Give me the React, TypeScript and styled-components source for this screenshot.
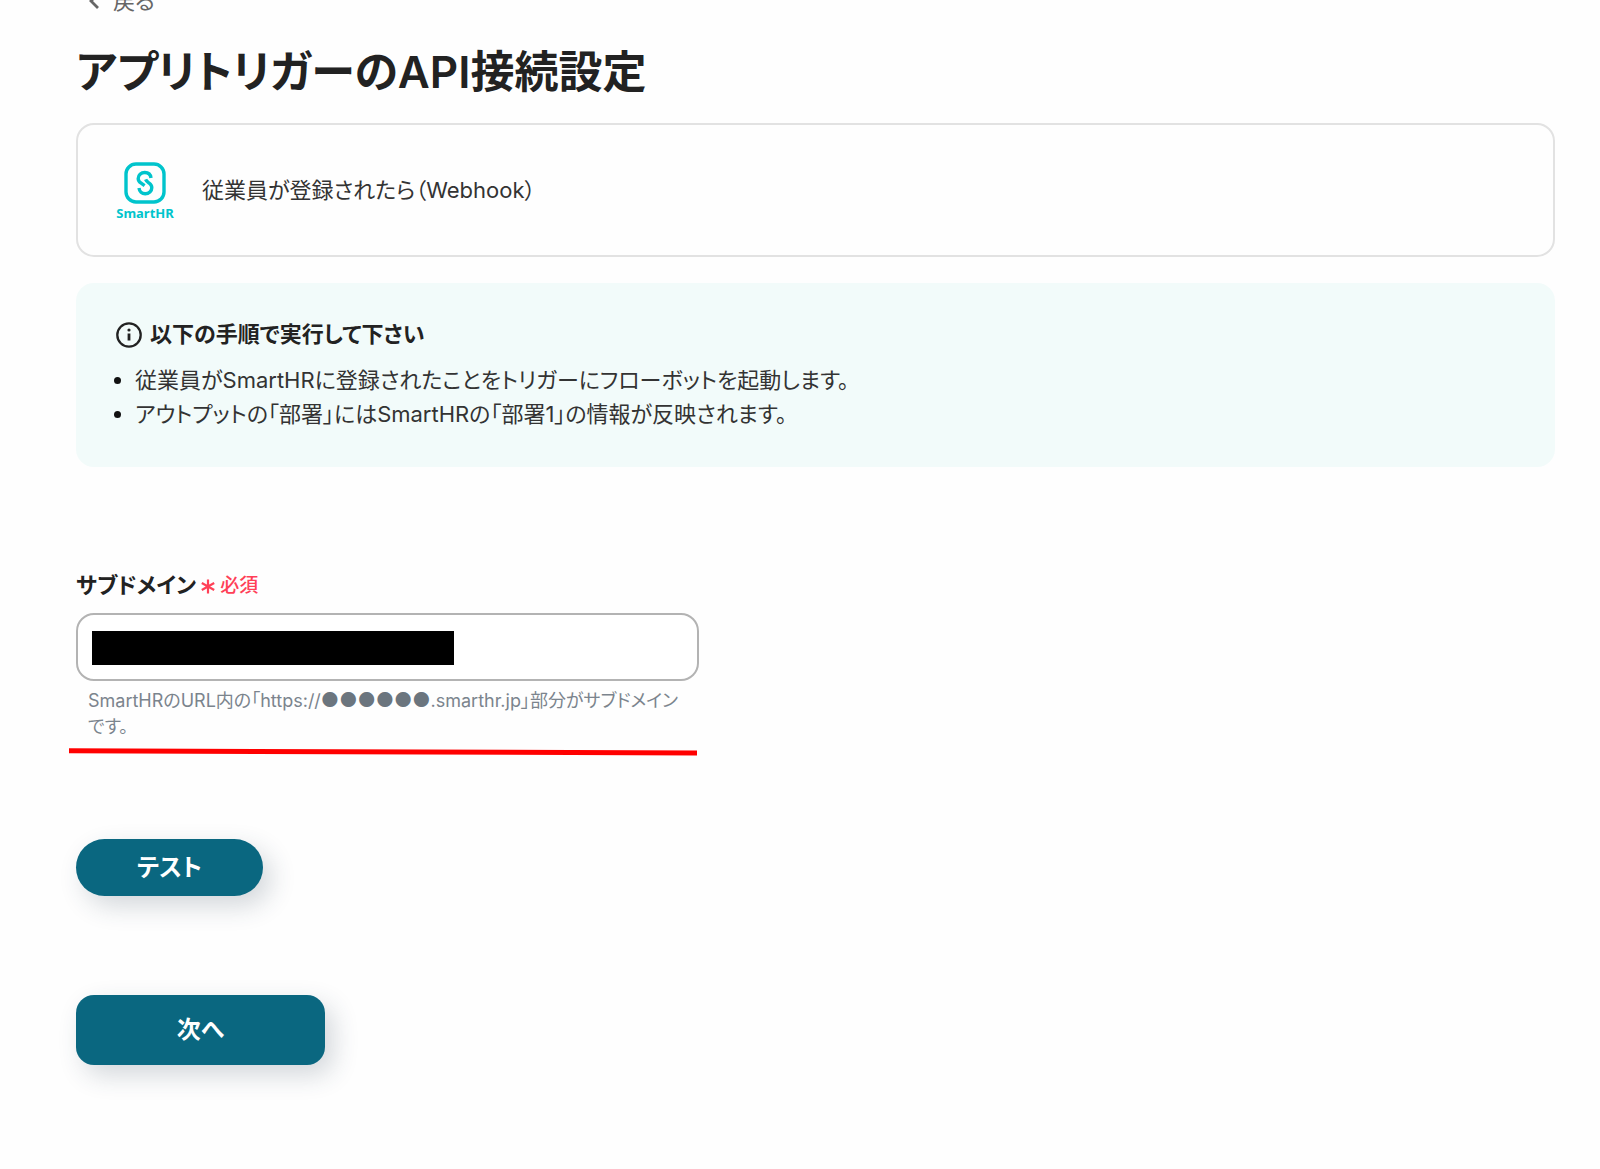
import React from "react";
import styled, { createGlobalStyle } from "styled-components";

const Global = createGlobalStyle`
  *, *::before, *::after { box-sizing: border-box; }
  body {
    margin: 0;
    background: #fefefe;
    color: #222;
    font-family: Inter, "Noto Sans CJK JP", sans-serif;
    font-feature-settings: "palt";
    font-size: 22px;
    line-height: 34px;
    overflow-x: hidden;
  }
`;

const Page = styled.main`
  display: flex;
  flex-direction: column;
  align-items: flex-start;
  margin-top: -16px;
  padding: 0 45px 64px 76px;
`;

const BackLink = styled.a`
  display: inline-flex;
  align-items: center;
  gap: 8px;
  padding-left: 8px;
  color: #666;
  text-decoration: none;
`;

const Title = styled.h1`
  margin: 22px 0 19px;
  font-size: 44px;
  line-height: 64px;
  font-weight: 600;
`;

const TriggerCard = styled.section`
  display: flex;
  align-items: center;
  gap: 28px;
  width: 100%;
  min-height: 134px;
  padding: 0 38px;
  border: 2px solid #e2e2e2;
  border-radius: 18px;
  color: #333;
`;

const Brand = styled.div`
  display: flex;
  flex-direction: column;
  align-items: center;
  width: 58px;
  padding-top: 3px;
  color: #00c4cc;
`;

const BrandName = styled.span`
  font: 700 13px/18px "Noto Sans", sans-serif;
`;

const Notice = styled.section`
  width: 100%;
  margin-top: 26px;
  padding: 34px 38px 36px;
  border-radius: 18px;
  background: #f2fbfa;
`;

const NoticeTitle = styled.h2`
  display: flex;
  align-items: center;
  gap: 8px;
  margin: 0;
  padding-left: 2px;
  font-size: 22px;
  font-weight: 600;
`;

const Steps = styled.ul`
  margin: 12px 0 0;
  padding-left: 21px;
  color: #333;
`;

const Step = styled.li`
  &::marker { color: #111; }
`;

const Field = styled.div`
  position: relative;
  width: 100%;
  max-width: 623px;
  margin-top: 100px;
`;

const Label = styled.label`
  display: flex;
  align-items: center;
  gap: 5px;
  font-size: 22px;
  font-weight: 600;
`;

const Required = styled.span`
  display: flex;
  align-items: center;
  gap: 5px;
  padding-top: 2px;
  color: #ff4057;
  font-size: 19px;
  font-weight: 500;
`;

const InputBox = styled.div`
  position: relative;
  margin-top: 10px;
`;

const TextInput = styled.input`
  display: block;
  width: 100%;
  height: 68px;
  padding: 0 16px;
  border: 2px solid #b3b3b3;
  border-radius: 18px;
  background: #fff;
  font: inherit;
`;

const Redaction = styled.span`
  position: absolute;
  top: 18px;
  left: 16px;
  width: 362px;
  height: 34px;
  background: #000;
`;

const Help = styled.p`
  margin: 7px 0 0;
  padding: 0 16px 0 12px;
  color: #7b848d;
  font-size: 18px;
  line-height: 26px;
`;

const Dots = styled.span`
  color: #6b757e;
  font-size: 20px;
  line-height: 20px;
`;

const Underline = styled.svg`
  position: absolute;
  left: -7px;
  bottom: -16px;
  width: 628px;
  height: 8px;
`;

const Button = styled.button<{ $large?: boolean }>`
  width: ${(p) => (p.$large ? 249 : 187)}px;
  height: ${(p) => (p.$large ? 70 : 57)}px;
  margin-top: 99px;
  border: 0;
  border-radius: ${(p) => (p.$large ? 18 : 29)}px;
  background: #0a6780;
  box-shadow: 8px 10px 26px rgba(40, 60, 80, 0.2);
  color: #fff;
  font: inherit;
  font-size: 24px;
  font-weight: 600;
  font-feature-settings: "palt";
  cursor: pointer;
`;

function ChevronIcon() {
  return (
    <svg width="21" height="22" viewBox="0 0 21 22" fill="none" aria-hidden="true">
      <path d="M14 4L7 11L14 18" stroke="currentColor" strokeWidth="2.8" />
    </svg>
  );
}

function InfoIcon() {
  return (
    <svg width="26" height="28" viewBox="0 -2 26 28" fill="none" aria-hidden="true">
      <circle cx="13" cy="13" r="11.7" stroke="#222" strokeWidth="2.3" />
      <path d="M13 11.5V18.5" stroke="#222" strokeWidth="2.8" />
      <circle cx="13" cy="8" r="1.6" fill="#222" />
    </svg>
  );
}

function SmartHrMark() {
  return (
    <svg width="42" height="42" viewBox="0 0 42 42" fill="none" stroke="currentColor" aria-hidden="true">
      <rect x="2" y="2" width="38" height="38" rx="10" strokeWidth="3.4" />
      <path
        d="M27 16C26.6 12.5 24 10.5 20.8 10.5C17 10.5 14.2 13.2 14.2 16.4C14.2 18.4 15.2 19.8 16.8 20.9L20.6 23.6"
        strokeWidth="3.4"
      />
      <path
        d="M15 26C15.4 29.5 18 31.8 21.2 31.8C25 31.8 27.8 29 27.8 25.8C27.8 23.8 26.8 22.3 25.2 21.2C23.8 20.2 22.4 19.4 21.6 17.4"
        strokeWidth="3.4"
      />
    </svg>
  );
}

function AsteriskIcon() {
  return (
    <svg width="14" height="15" viewBox="0 0 14 15" stroke="currentColor" strokeWidth="2.2" aria-hidden="true">
      <path d="M7 0.5V14.5M0.8 4L13.2 11M13.2 4L0.8 11" />
    </svg>
  );
}

export default function App() {
  return (
    <>
      <Global />
      <Page>
        <BackLink href="#back">
          <ChevronIcon />
          戻る
        </BackLink>
        <Title lang="ja">アプリトリガーのAPI接続設定</Title>

        <TriggerCard>
          <Brand>
            <SmartHrMark />
            <BrandName>SmartHR</BrandName>
          </Brand>
          <span>従業員が登録されたら（Webhook）</span>
        </TriggerCard>

        <Notice>
          <NoticeTitle>
            <InfoIcon />
            以下の手順で実行して下さい
          </NoticeTitle>
          <Steps>
            <Step>従業員がSmartHRに登録されたことをトリガーにフローボットを起動します。</Step>
            <Step>アウトプットの「部署」にはSmartHRの「部署1」の情報が反映されます。</Step>
          </Steps>
        </Notice>

        <Field>
          <Label htmlFor="subdomain">
            サブドメイン
            <Required>
              <AsteriskIcon />
              必須
            </Required>
          </Label>
          <InputBox>
            <TextInput id="subdomain" type="text" required aria-describedby="subdomain-help" />
            <Redaction />
          </InputBox>
          <Help id="subdomain-help">
            SmartHRのURL内の「https://<Dots>●●●●●●</Dots>.smarthr.jp」部分がサブドメインです。
          </Help>
          <Underline viewBox="0 0 628 8" aria-hidden="true">
            <path d="M0 2.8L628 5" stroke="#f00" strokeWidth="5" />
          </Underline>
        </Field>

        <Button type="button">テスト</Button>
        <Button type="button" $large>
          次へ
        </Button>
      </Page>
    </>
  );
}
